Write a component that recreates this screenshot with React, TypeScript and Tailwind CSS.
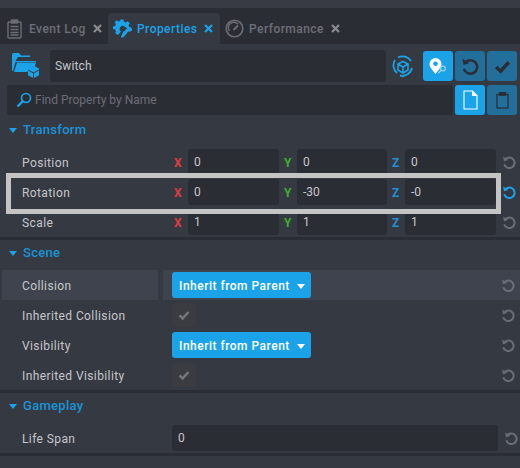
import React from "react";

function Undo({ c = "#6b6e75", s = 14 }: { c?: string; s?: number }) {
  return (
    <svg width={s} height={s} viewBox="0 0 16 16" fill="none">
      <path d="M3.6 5.2A6 6 0 1 1 2.6 10.5" stroke={c} strokeWidth="2.3" />
      <path d="M1.4 1.6L2.2 7l5-1.4z" fill={c} />
    </svg>
  );
}

function Caret({ c = "#1da2e8", w = 9 }: { c?: string; w?: number }) {
  return (
    <svg width={w} height={Math.round(w * 0.6)} viewBox="0 0 10 6">
      <path d="M0 0H10L5 6z" fill={c} />
    </svg>
  );
}

function Check({ c, s = 14 }: { c: string; s?: number }) {
  return (
    <svg width={s} height={s} viewBox="0 0 16 16" fill="none">
      <path d="M2 8.5L6.2 12.5L14 4" stroke={c} strokeWidth="3.4" />
    </svg>
  );
}

function Close({ c }: { c: string }) {
  return (
    <svg width="9" height="9" viewBox="0 0 9 9" fill="none">
      <path d="M1 1L8 8M8 1L1 8" stroke={c} strokeWidth="2.2" />
    </svg>
  );
}

function Field({ v, className }: { v: string; className: string }) {
  return (
    <div className={`h-[26px] rounded-[3px] bg-[#2b2d35] pl-[6px] text-[12px] leading-[27px] text-[#c6c7ca] ${className}`}>{v}</div>
  );
}

function Section({ title, first, children }: { title: string; first?: boolean; children: React.ReactNode }) {
  return (
    <section className={`border-b-[3px] border-[#2b2d35] ${first ? "mt-[3px]" : ""}`}>
      <div className={`flex items-center gap-[6px] pl-[9px] ${first ? "h-[29px] pb-[5px]" : "h-[30px] pb-[4px]"}`}>
        <Caret w={8} />
        <span className="text-[13px] font-medium tracking-[0.3px] text-[#1a94d8]">{title}</span>
      </div>
      {children}
    </section>
  );
}

function Label({ children }: { children: React.ReactNode }) {
  return <span className="w-[172px] shrink-0 pl-[22px] pt-[2px] text-[12px] tracking-[0.4px] text-[#c6c7ca]">{children}</span>;
}

function VecRow({ label, x, y, z, active }: { label: string; x: string; y: string; z: string; active?: boolean }) {
  return (
    <div className="flex h-[30px] items-center">
      <Label>{label}</Label>
      <span className="w-[16px] pl-[2px] pt-[2px] text-[12px] font-bold text-[#e03c3c]">X</span>
      <Field v={x} className="w-[91px]" />
      <span className="w-[18px] pl-[5px] pt-[2px] text-[12px] font-bold text-[#3fae2a]">Y</span>
      <Field v={y} className="w-[90px]" />
      <span className="w-[18px] pl-[5px] pt-[2px] text-[12px] font-bold text-[#1f8fd6]">Z</span>
      <Field v={z} className="w-[91px]" />
      <span className="ml-[6px] flex w-[15px]"><Undo c={active ? "#1da2e8" : "#6b6e75"} /></span>
    </div>
  );
}

function SelectRow({ label, hl }: { label: string; hl?: boolean }) {
  return (
    <div className={`flex h-[30px] items-center pr-[2px] ${hl ? "bg-[linear-gradient(90deg,#353942_0,#353942_2px,#3f434d_2px,#3f434d_158px,#353942_158px,#353942_163px,#3f434d_163px)]" : ""}`}>
      <Label>{label}</Label>
      <div className="flex h-[26px] w-[139px] items-center justify-between rounded-[3px] bg-[#1aa3e8] pl-[7px] pr-[6px] pt-[2px] text-[12px] font-medium tracking-[0.5px] text-white">
        Inherit from Parent <Caret c="#ffffff" w={8} />
      </div>
      <span className="ml-auto mr-[3px] flex"><Undo /></span>
    </div>
  );
}

function CheckRow({ label }: { label: string }) {
  return (
    <div className="flex h-[30px] items-center pr-[2px]">
      <Label>{label}</Label>
      <div className="flex h-[24px] w-[24px] items-center justify-center rounded-[3px] bg-[#3b3c41]">
        <Check c="#75767b" s={12} />
      </div>
      <span className="ml-auto mr-[3px] flex"><Undo /></span>
    </div>
  );
}

function IconBtn({ on, children, className = "" }: { on?: boolean; children: React.ReactNode; className?: string }) {
  return (
    <div className={`flex h-[30px] w-[30px] items-center justify-center rounded-[3px] ${on ? "bg-[#1aa3e8]" : "bg-[#236f9c]"} ${className}`}>{children}</div>
  );
}

function Tab({ icon, label, c, x, on, pad, gap = "ml-[5px]" }: { icon: React.ReactNode; label: string; c: string; x: string; on?: boolean; pad: string; gap?: string }) {
  return (
    <div className={`flex h-[31px] items-center rounded-t-[3px] ${pad} ${on ? "w-[112px] bg-[#353942]" : ""}`}>
      {icon}
      <span className={`${gap} text-[12px] font-medium tracking-[0.45px]`} style={{ color: c }}>{label}</span>
      <span className="ml-[7px] flex"><Close c={x} /></span>
    </div>
  );
}

export default function App() {
  return (
    <div className="relative h-[468px] w-[520px] overflow-hidden bg-[#353942] font-['Roboto',sans-serif]">
      <div className="h-[8px] bg-[#383b44]" />
      <div className="flex h-[36px] items-end bg-[#2b2d35]">
        <div className="w-[108px]">
          <Tab
            pad="pl-[7px]"
            gap="ml-[7px]"
            label="Event Log"
            c="#6d6f76"
            x="#8a8c92"
            icon={
              <svg width="15" height="20" viewBox="0 0 15 20" fill="none" stroke="#6b6d73" strokeWidth="1.4">
                <rect x="1" y="3" width="13" height="16" rx="1" />
                <rect x="4.5" y="1" width="6" height="3" fill="#6b6d73" />
                <path d="M3.5 7.5H11.5M3.5 10.5H11.5M3.5 13.5H11.5M3.5 16H11.5" />
              </svg>
            }
          />
        </div>
        <Tab
          on
          pad="pl-[5px]"
          label="Properties"
          c="#1aa3e8"
          x="#1aa3e8"
          icon={
            <svg width="19" height="19" viewBox="0 0 19 19">
              <path
                fill="#1aa3e8"
                fillRule="evenodd"
                d="M7.5 0.5h3l.5 2.3 1.8.8 2-1.3 2 2-1.2 2 .7 1.7 2.3.5v2.6l-2.1.5-5-4.2A3 3 0 1 0 8 12.4l-2.4 3.1-1.9-.1-1.4-1.4.6-1.6-.7-1.8L0 10V7.5l2.2-.6.7-1.7-1.2-2 2-2 2 1.2 1.5-.7z"
              />
              <path d="M8.5 11.5L14 6.5l1 1.5 3-.2-.3 1.7-2.5 1.4-1.5-.3-4.6 5.8-2.4.5.2-2.2z" fill="#1aa3e8" transform="translate(1.5 1.8)" />
            </svg>
          }
        />
        <Tab
          pad="pl-[5px]"
          label="Performance"
          c="#6d6f76"
          x="#8a8c92"
          icon={
            <svg width="19" height="19" viewBox="0 0 19 19" fill="none" stroke="#6b6d73">
              <circle cx="9.5" cy="9.5" r="8.3" strokeWidth="1.6" />
              <path d="M4.5 12A5.4 5.4 0 0 1 13 5.3" strokeWidth="1.4" />
              <path d="M8.5 11L13 6.5" strokeWidth="2" />
            </svg>
          }
        />
      </div>

      <div className="mt-[6px] flex h-[32px] items-start pl-[12px]">
        <svg width="27" height="25" viewBox="0 0 27 25" className="mt-[3px]">
          <path d="M0 1.5A1.5 1.5 0 0 1 1.5 0H7l2 2.5h9V4H6L3.5 8H24V9H3.5L1 18H0z" fill="#1aa3e8" />
          <path d="M2 19L5 9.500H24L22 16.500H17L15 19z" fill="#1aa3e8" />
          <path d="M21.500 12.500L27 15.500V16.500L21.500 19.500L16 16.500V15.500z" fill="#1aa3e8" />
          <path d="M16 17.500L21 20.200V25L16 22.300zM27 17.500V22.300L22 25V20.200z" fill="#1aa3e8" />
        </svg>
        <div className="ml-[11px] h-[32px] w-[336px] rounded-[3px] bg-[#2b2d35] pl-[5px] text-[12px] leading-[32px] tracking-[0.15px] text-[#c6c7ca]">Switch</div>
        <svg width="22" height="23" viewBox="0 0 22 23" fill="none" stroke="#1aa3e8" className="ml-[6px] mt-[5px]">
          <path d="M3 5A10 10 0 0 0 5 18M8 20.500A10 10 0 0 0 20 13M19 6A10 10 0 0 0 6 2.500" strokeWidth="1.800" />
          <path d="M11 6.500L16 9V15L11 18L6 15V9z" strokeWidth="1.600" />
          <path d="M6 9L11 12L16 9M11 12V18" strokeWidth="1.600" />
          <path d="M8.500 20L11 22.500L13.500 20z" fill="#1aa3e8" stroke="none" />
        </svg>
        <IconBtn on className="ml-[9px] mt-[1px]">
          <svg width="20" height="20" viewBox="0 0 20 20">
            <path fillRule="evenodd" d="M7.500 2A6 6 0 0 1 13.500 8C13.500 11 10 15 7.500 18C5 15 1.500 11 1.500 8A6 6 0 0 1 7.500 2zM7.500 5.500A2.300 2.300 0 1 0 7.500 10.100A2.300 2.300 0 1 0 7.500 5.500z" fill="#ffffff" />
            <circle cx="15" cy="12.500" r="2.400" fill="none" stroke="#9fd6f3" strokeWidth="1.200" />
            <path d="M10.500 17L13 14.500" stroke="#9fd6f3" strokeWidth="1.200" />
          </svg>
        </IconBtn>
        <IconBtn className="ml-[2px] mt-[1px]"><Undo c="#2c2e36" s={18} /></IconBtn>
        <IconBtn className="ml-[2px] mt-[1px]"><Check c="#2c2e36" s={17} /></IconBtn>
      </div>

      <div className="mt-[3px] flex h-[30px] items-start pl-[7px]">
        <div className="flex h-[30px] w-[446px] items-center rounded-[3px] bg-[#2b2d35] pl-[9px]">
          <svg width="16" height="16" viewBox="0 0 16 16" fill="none" stroke="#1aa3e8">
            <circle cx="10" cy="6" r="4.500" strokeWidth="1.700" />
            <path d="M6.500 9.500L1.500 14.500" strokeWidth="2.400" />
          </svg>
          <span className="ml-[3px] text-[12px] text-[#6c6e75]">Find Property by Name</span>
        </div>
        <IconBtn on className="ml-[2px]">
          <svg width="15" height="20" viewBox="0 0 15 20" fill="none" stroke="#ffffff" strokeWidth="1.100">
            <path d="M1 1H9.500L14 5.500V19H1z" />
            <path d="M9.500 1V5.500H14" fill="#ffffff" />
          </svg>
        </IconBtn>
        <IconBtn className="ml-[2px]">
          <svg width="13" height="17" viewBox="0 0 13 17" fill="none" stroke="#2c2e36" strokeWidth="1.300">
            <rect x="1" y="2.500" width="11" height="13.500" />
            <rect x="3.500" y="0.700" width="6" height="2.500" fill="#2c2e36" />
          </svg>
        </IconBtn>
      </div>

      <Section first title="Transform">
        <VecRow label="Position" x="0" y="0" z="0" />
        <VecRow label="Rotation" x="0" y="-30" z="-0" active />
        <VecRow label="Scale" x="1" y="1" z="1" />
      </Section>
      <Section title="Scene">
        <SelectRow label="Collision" hl />
        <CheckRow label="Inherited Collision" />
        <SelectRow label="Visibility" />
        <CheckRow label="Inherited Visibility" />
      </Section>
      <Section title="Gameplay">
        <div className="flex h-[30px] items-center">
          <Label>Life Span</Label>
          <Field v="0" className="w-[326px]" />
          <span className="ml-[6px] flex"><Undo /></span>
        </div>
      </Section>

      <div className="absolute left-[6px] top-[173px] h-[41px] w-[495px] border-[5px] border-[#c4c4c4]" />
    </div>
  );
}
